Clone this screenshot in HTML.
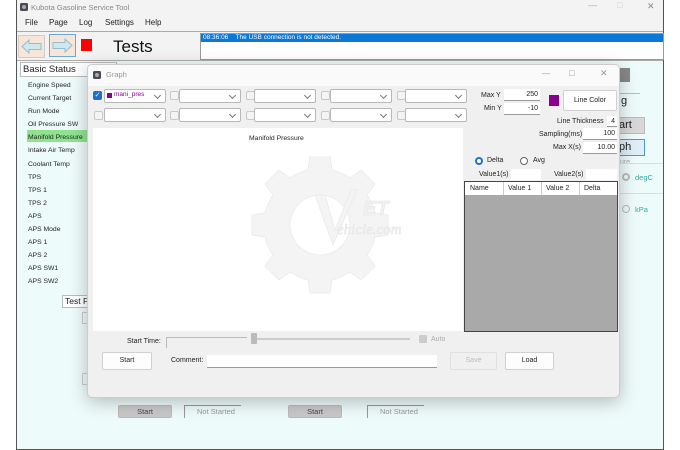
<!DOCTYPE html>
<html><head><meta charset="utf-8"><style>
*{margin:0;padding:0;box-sizing:border-box}
body{width:680px;height:450px;background:#fff;position:relative;overflow:hidden;font-family:"Liberation Sans",sans-serif;font-size:7px;color:#222}
.a{position:absolute;white-space:nowrap}
.cb{position:absolute;width:9px;height:9px;border:1px solid #c8c8c8;background:#f4f4f4;border-radius:2px}
.combo{position:absolute;height:14px;border:1px solid #b8b8b8;background:#fff;border-radius:2px}
.combo:after{content:"";position:absolute;right:5px;top:3px;width:4px;height:4px;border-right:1px solid #777;border-bottom:1px solid #777;transform:rotate(45deg)}
.inp{position:absolute;background:#fff;border-bottom:1px solid #999;text-align:right;padding-right:2px;font-size:7px;line-height:11px}
.btn{position:absolute;background:#fdfdfd;border:1px solid #d0d0d0;border-radius:2px;text-align:center;font-size:7px}
</style></head><body>
<div class="a" style="left:16px;top:0;width:648px;height:450px;border:1px solid #555;border-top:none;background:#eefbfb"></div>
<div class="a" style="left:17px;top:0;width:646px;height:60px;background:#f3f3f3"></div>
<svg class="a" style="left:19px;top:2px" width="10" height="10"><rect x="1" y="1" width="8" height="8" rx="1.5" fill="#4a4a55"/><circle cx="5" cy="5" r="2" fill="#aaa"/></svg>
<div class="a" style="left:31px;top:3px;font-size:7.5px;color:#888">Kubota Gasoline Service Tool</div>
<div class="a" style="left:588px;top:0;font-size:9px;color:#aaa">—</div>
<div class="a" style="left:617px;top:0;font-size:9px;color:#ccc">□</div>
<div class="a" style="left:647px;top:1px;font-size:9px;color:#888">✕</div>
<div class="a" style="left:25px;top:18px;font-size:8px;color:#222">File</div>
<div class="a" style="left:49px;top:18px;font-size:8px">Page</div>
<div class="a" style="left:79px;top:18px;font-size:8px">Log</div>
<div class="a" style="left:105px;top:18px;font-size:8px">Settings</div>
<div class="a" style="left:145px;top:18px;font-size:8px">Help</div>
<div class="a" style="left:17px;top:31px;width:646px;height:1px;background:#aaa"></div>
<div class="a" style="left:18px;top:35px;width:27px;height:23px;background:#f6e6d8;border:1px solid #ccc"></div>
<svg class="a" style="left:20px;top:38px" width="23" height="17"><path d="M2,8.5 L9,2 L9,5.5 L21,5.5 L21,11.5 L9,11.5 L9,15 Z" fill="#cfe8ee" stroke="#9bc"/></svg>
<div class="a" style="left:49px;top:34px;width:27px;height:23px;background:#f6e6d8;border:1px solid #6aa7d8"></div>
<svg class="a" style="left:51px;top:37px" width="23" height="17"><path d="M21,8.5 L14,2 L14,5.5 L2,5.5 L2,11.5 L14,11.5 L14,15 Z" fill="#cfe8ee" stroke="#9bc"/></svg>
<div class="a" style="left:81px;top:39px;width:11px;height:12px;background:#f00"></div>
<div class="a" style="left:113px;top:37px;font-size:17px;color:#111">Tests</div>
<div class="a" style="left:200px;top:33px;width:464px;height:27px;background:#fff;border:1px solid #999"></div>
<div class="a" style="left:201px;top:34px;width:462px;height:8px;background:#0a78d7;color:#fff;font-size:6.5px;line-height:8px;padding-left:2px">08:36:06&nbsp;&nbsp;&nbsp;&nbsp;The USB connection is not detected.</div>
<div class="a" style="left:17px;top:60px;width:646px;height:1px;background:#aaa"></div>
<div class="a" style="left:20px;top:62px;width:97px;height:15px;background:#fff;border:1px solid #bbb;font-size:9.5px;padding-left:2px;line-height:14px">Basic Status</div>
<div class="a" style="left:27px;top:130px;width:62px;height:12px;background:#8fe38f"></div>
<div class="a" style="left:28px;top:79px;font-size:6.8px;line-height:13.1px">Engine Speed<br>Current Target<br>Run Mode<br>Oil Pressure SW<br>Manifold Pressure<br>Intake Air Temp<br>Coolant Temp<br>TPS<br>TPS 1<br>TPS 2<br>APS<br>APS Mode<br>APS 1<br>APS 2<br>APS SW1<br>APS SW2</div>
<div class="a" style="left:62px;top:295px;width:30px;height:13px;background:#fff;border:1px solid #bbb;font-size:8.5px;padding-left:2px">Test F</div>
<div class="a" style="left:82px;top:312px;width:10px;height:12px;border:1px solid #ccc"></div>
<div class="a" style="left:82px;top:373px;width:10px;height:12px;border:1px solid #ccc"></div>
<div class="btn" style="left:118px;top:405px;width:54px;height:13px;background:#c8c8c8;border-color:#bbb;line-height:12px;font-size:7.5px;color:#444">Start</div>
<div class="a" style="left:184px;top:405px;width:57px;height:13px;border-top:1px solid #999;border-left:1px solid #999;font-size:7.5px;color:#999;padding-left:12px;line-height:12px">Not Started</div>
<div class="btn" style="left:288px;top:405px;width:54px;height:13px;background:#c8c8c8;border-color:#bbb;line-height:12px;font-size:7.5px;color:#444">Start</div>
<div class="a" style="left:367px;top:405px;width:57px;height:13px;border-top:1px solid #999;border-left:1px solid #999;font-size:7.5px;color:#999;padding-left:12px;line-height:12px">Not Started</div>
<div class="a" style="left:620px;top:68px;width:10px;height:14px;background:#888"></div>
<div class="a" style="left:620px;top:93px;width:20px;height:1px;background:#bbb"></div>
<div class="a" style="left:621px;top:95px;font-size:11px">g</div>
<div class="a" style="left:618px;top:117px;width:27px;height:17px;background:#d8d8d8;border:1px solid #bbb;font-size:11px;line-height:15px">art</div>
<div class="a" style="left:618px;top:139px;width:27px;height:17px;background:#e0eef8;border:1px solid #4a9ad8;font-size:11px;line-height:15px">ph</div>
<div class="a" style="left:620px;top:159px;font-size:7px;color:#aaa">ure</div>
<div class="a" style="left:620px;top:163px;width:43px;height:1px;background:#ddd"></div>
<div class="a" style="left:622px;top:173px;width:8px;height:8px;border:2px solid #bbb;border-radius:50%"></div>
<div class="a" style="left:635px;top:173px;font-size:7.5px;color:#3a9">degC</div>
<div class="a" style="left:620px;top:193px;width:43px;height:1px;background:#ddd"></div>
<div class="a" style="left:622px;top:205px;width:8px;height:8px;border:1px solid #bbb;border-radius:50%"></div>
<div class="a" style="left:635px;top:205px;font-size:7.5px;color:#3a9">kPa</div>

<div class="a" style="left:87px;top:64px;width:533px;height:334px;background:#f0f0f0;border:1px solid #ccc;border-radius:5px;box-shadow:0 4px 18px rgba(0,0,0,.25);overflow:hidden">
 <div class="a" style="left:0;top:0;width:533px;height:21px;background:#fafafa"></div>
</div>
<svg class="a" style="left:92px;top:70px" width="10" height="10"><rect x="1" y="1" width="8" height="8" rx="1.5" fill="#4a4a55"/><circle cx="5" cy="5" r="2" fill="#aaa"/></svg>
<div class="a" style="left:106px;top:70px;font-size:7.5px;color:#999">Graph</div>
<div class="a" style="left:542px;top:69px;font-size:8px;color:#999">—</div>
<div class="a" style="left:569px;top:68px;font-size:9px;color:#999">□</div>
<div class="a" style="left:600px;top:68px;font-size:9px;color:#999">✕</div>

<div class="cb" style="left:93px;top:91px;background:#1f6fce;border-color:#1f6fce;color:#fff;font-size:7px;line-height:7px;text-align:center">✓</div>
<div class="combo" style="left:104px;top:89px;width:62px"><span style="position:absolute;left:2px;top:3px;width:5px;height:5px;background:#8b008b"></span><span style="position:absolute;left:9px;top:1px;font-size:6.5px;color:#8b008b">mani_pres</span></div>
<div class="cb" style="left:170px;top:91px"></div><div class="combo" style="left:179px;top:89px;width:62px"></div>
<div class="cb" style="left:246px;top:91px"></div><div class="combo" style="left:254px;top:89px;width:62px"></div>
<div class="cb" style="left:321px;top:91px"></div><div class="combo" style="left:330px;top:89px;width:62px"></div>
<div class="cb" style="left:397px;top:91px"></div><div class="combo" style="left:405px;top:89px;width:62px"></div>
<div class="cb" style="left:94px;top:111px"></div><div class="combo" style="left:104px;top:108px;width:62px"></div>
<div class="cb" style="left:170px;top:111px"></div><div class="combo" style="left:179px;top:108px;width:62px"></div>
<div class="cb" style="left:246px;top:111px"></div><div class="combo" style="left:254px;top:108px;width:62px"></div>
<div class="cb" style="left:321px;top:111px"></div><div class="combo" style="left:330px;top:108px;width:62px"></div>
<div class="cb" style="left:397px;top:111px"></div><div class="combo" style="left:405px;top:108px;width:62px"></div>

<div class="a" style="left:481px;top:92px">Max Y</div>
<div class="inp" style="left:504px;top:89px;width:36px;height:12px">250</div>
<div class="a" style="left:484px;top:105px">Min Y</div>
<div class="inp" style="left:504px;top:103px;width:36px;height:12px">-10</div>
<div class="a" style="left:549px;top:95px;width:10px;height:11px;background:#8b008b"></div>
<div class="btn" style="left:563px;top:90px;width:54px;height:21px;line-height:19px">Line Color</div>
<div class="a" style="left:557px;top:118px">Line Thickness</div>
<div class="inp" style="left:607px;top:116px;width:10px;height:11px">4</div>
<div class="a" style="left:539px;top:131px">Sampling(ms)</div>
<div class="inp" style="left:583px;top:128px;width:34px;height:12px">100</div>
<div class="a" style="left:553px;top:144px">Max X(s)</div>
<div class="inp" style="left:583px;top:142px;width:34px;height:12px">10.00</div>

<div class="a" style="left:93px;top:128px;width:370px;height:203px;background:#fff"></div>
<div class="a" style="left:249px;top:135px;font-size:6.8px">Manifold Pressure</div>
<svg class="a" style="left:245px;top:150px" width="200" height="150" viewBox="0 0 200 150">
 <g fill="#f4f4f4" stroke="#ececec" stroke-width="1">
  <g transform="translate(75,75)">
   <path d="M-10,-68 L10,-68 L12,-55 A56,56 0 0 1 30,-47 L41,-55 L55,-41 L47,-30 A56,56 0 0 1 55,-12 L68,-10 L68,10 L55,12 A56,56 0 0 1 47,30 L55,41 L41,55 L30,47 A56,56 0 0 1 12,55 L10,68 L-10,68 L-12,55 A56,56 0 0 1 -30,47 L-41,55 L-55,41 L-47,30 A56,56 0 0 1 -55,12 L-68,10 L-68,-10 L-55,-12 A56,56 0 0 1 -47,-30 L-55,-41 L-41,-55 L-30,-47 A56,56 0 0 1 -12,-55 Z M0,-30 A30,30 0 1 0 0.1,-30 Z" fill-rule="evenodd"/>
  </g>
  <path d="M70,45 L88,95 L112,40 L106,40 L90,80 L80,45 Z"/>
 </g>
 <text x="118" y="65" font-family="Liberation Sans" font-style="italic" font-weight="bold" font-size="20" fill="#f0f0f0" stroke="#e6e6e6" stroke-width=".6">ET</text>
 <text x="92" y="84" font-family="Liberation Serif" font-style="italic" font-size="15" fill="#f0f0f0" stroke="#e6e6e6" stroke-width=".6">ehicle.com</text>
</svg>

<div class="a" style="left:475px;top:157px;width:8px;height:8px;border:2.5px solid #1f6fce;border-radius:50%;background:#fff"></div>
<div class="a" style="left:487px;top:157px">Delta</div>
<div class="a" style="left:520px;top:157px;width:8px;height:8px;border:1px solid #666;border-radius:50%;background:#fff"></div>
<div class="a" style="left:533px;top:157px">Avg</div>
<div class="a" style="left:479px;top:171px">Value1(s)</div>
<div class="a" style="left:511px;top:169px;width:30px;height:11px;background:#fff"></div>
<div class="a" style="left:554px;top:171px">Value2(s)</div>
<div class="a" style="left:586px;top:169px;width:31px;height:11px;background:#fff"></div>
<div class="a" style="left:464px;top:181px;width:154px;height:151px;background:#a9a9a9;border:1px solid #444"></div>
<div class="a" style="left:465px;top:182px;width:152px;height:13px;background:#fff;font-size:7px;line-height:13px">
 <span class="a" style="left:5px">Name</span><span class="a" style="left:43px">Value 1</span><span class="a" style="left:81px">Value 2</span><span class="a" style="left:119px">Delta</span>
 <span class="a" style="left:38px;top:0;width:1px;height:13px;background:#ccc"></span><span class="a" style="left:76px;top:0;width:1px;height:13px;background:#ccc"></span><span class="a" style="left:114px;top:0;width:1px;height:13px;background:#ccc"></span>
</div>

<div class="a" style="left:127px;top:338px">Start Time:</div>
<div class="a" style="left:166px;top:337px;width:81px;height:11px;border-top:1px solid #bbb;border-left:1px solid #bbb"></div>
<div class="a" style="left:255px;top:338px;width:155px;height:2px;background:#ddd;border:1px solid #ccc"></div>
<div class="a" style="left:251px;top:333px;width:6px;height:11px;background:#bbb;border-radius:1px"></div>
<div class="a" style="left:419px;top:335px;width:8px;height:8px;background:#ccc;border-radius:1px"></div>
<div class="a" style="left:431px;top:336px;color:#aaa">Auto</div>
<div class="btn" style="left:102px;top:352px;width:50px;height:18px;line-height:16px">Start</div>
<div class="a" style="left:171px;top:357px">Comment:</div>
<div class="a" style="left:207px;top:355px;width:230px;height:13px;background:#fff;border-bottom:1px solid #999"></div>
<div class="btn" style="left:450px;top:352px;width:47px;height:18px;line-height:16px;background:#f0f0f0;border-color:#e0e0e0;color:#bbb">Save</div>
<div class="btn" style="left:505px;top:352px;width:49px;height:18px;line-height:16px">Load</div>
</body></html>
